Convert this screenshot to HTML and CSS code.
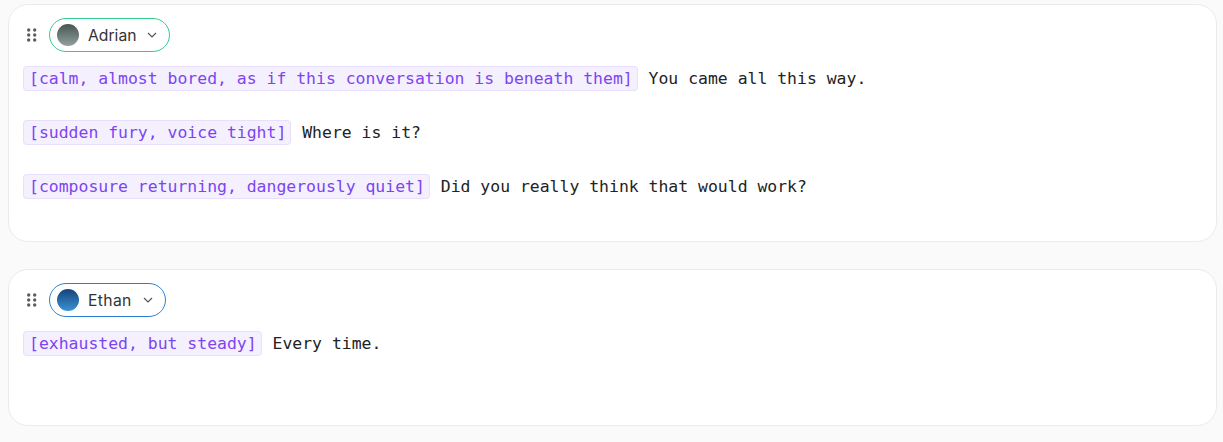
FILE: index.html
```html
<!DOCTYPE html>
<html lang="en">
<head>
    <meta charset="UTF-8">
    <meta name="viewport" content="width=device-width, initial-scale=1.0">
    <title>Script</title>
    <link rel="stylesheet" href="styles.css">
</head>
<body>
    <div class="card">
        <div class="card-head">
            <svg class="grip" width="10" height="14" viewBox="0 0 10 14"><circle cx="1.7" cy="2" r="1.7"/><circle cx="7.7" cy="2" r="1.7"/><circle cx="1.7" cy="7" r="1.7"/><circle cx="7.7" cy="7" r="1.7"/><circle cx="1.7" cy="12" r="1.7"/><circle cx="7.7" cy="12" r="1.7"/></svg>
            <button class="voice voice-green">
                <span class="avatar avatar-grey"></span>
                <span class="voice-name">Adrian</span>
                <svg class="chevron" width="10" height="6" viewBox="0 0 10 6"><path d="M1 1l4 4 4-4"/></svg>
            </button>
        </div>
        <div class="script">
            <p class="line"><span class="tag">[calm, almost bored, as if this conversation is beneath them]</span> You came all this way.</p>
            <p class="line"><span class="tag">[sudden fury, voice tight]</span> Where is it?</p>
            <p class="line"><span class="tag">[composure returning, dangerously quiet]</span> Did you really think that would work?</p>
        </div>
    </div>

    <div class="card">
        <div class="card-head">
            <svg class="grip" width="10" height="14" viewBox="0 0 10 14"><circle cx="1.7" cy="2" r="1.7"/><circle cx="7.7" cy="2" r="1.7"/><circle cx="1.7" cy="7" r="1.7"/><circle cx="7.7" cy="7" r="1.7"/><circle cx="1.7" cy="12" r="1.7"/><circle cx="7.7" cy="12" r="1.7"/></svg>
            <button class="voice voice-blue">
                <span class="avatar avatar-blue"></span>
                <span class="voice-name">Ethan</span>
                <svg class="chevron" width="10" height="6" viewBox="0 0 10 6"><path d="M1 1l4 4 4-4"/></svg>
            </button>
        </div>
        <div class="script">
            <p class="line"><span class="tag">[exhausted, but steady]</span> Every time.</p>
        </div>
    </div>
</body>
</html>
```

FILE: styles.css
```css
body {
    margin: 0;
    padding: 4px 6px 0 8px;
    background: #fafafa;
    color: #222;
    overflow: hidden;
}
.card {
    background: #fff;
    border: 1px solid #ebebeb;
    border-radius: 20px;
    padding: 13px 14px 41px;
    margin-bottom: 27px;
}
.card-head {
    display: flex;
    align-items: center;
    gap: 12px;
    margin-bottom: 13px;
    padding-left: 4px;
}
.grip {
    fill: #5c5c66;
}
.voice {
    display: flex;
    align-items: center;
    height: 34px;
    box-sizing: border-box;
    padding: 0 12px 0 7px;
    background: #fff;
    border: 1px solid;
    border-radius: 17px;
    font-family: Inter, sans-serif;
    font-size: 15.7px;
    color: #333;
}
.voice-green {
    border-color: #2fce8c;
}
.voice-blue {
    border-color: #2f80d0;
}
.voice-blue .voice-name {
    letter-spacing: 0.35px;
}
.avatar {
    width: 22px;
    height: 22px;
    border-radius: 50%;
    margin-right: 9px;
}
.avatar-grey {
    background: linear-gradient(180deg, #465452, #93a09e);
}
.avatar-blue {
    background: linear-gradient(180deg, #16427a, #3a93d3);
}
.chevron {
    margin-left: 11px;
    fill: none;
    stroke: #555;
    stroke-width: 1.2;
}
.script {
    min-height: 54px;
}
.line {
    margin: 0 0 27px;
    font-family: "DejaVu Sans Mono", monospace;
    font-size: 16.45px;
    line-height: 27px;
}
.line:last-child {
    margin-bottom: 0;
}
.tag {
    padding: 2px 4px 2px 5px;
    margin-right: 1px;
    background: #f5f0fe;
    border: 1px solid #e9dffc;
    border-radius: 4px;
    color: #7c45f0;
}
```
